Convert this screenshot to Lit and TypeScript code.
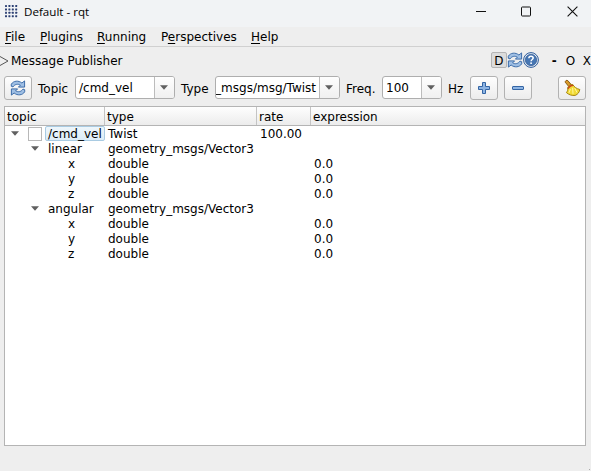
import { LitElement, html, css, svg } from "lit";
import { customElement } from "lit/decorators.js";

const refreshIcon = html`<svg class="ic" width="16" height="16" viewBox="0 0 16 16">
  <g fill="#9fbfe4" stroke="#2f62a3" stroke-width="0.9" stroke-linejoin="round">
    <path d="M1.300 4.200C3.500.6 8.500.2 11.900 3L14.600.9v6.200H8.400l2-2C7.800 3.600 4.800 4.200 3 6.900L1.300 6.300z"/>
    <path d="M14.700 11.800C12.500 15.400 7.500 15.800 4.100 13L1.400 15.100V8.900h6.200l-2 2c2.600 1.500 5.600.9 7.400-1.800l1.700.6z"/>
  </g>
</svg>`;

const helpIcon = html`<svg class="ic" width="16" height="16" viewBox="0 0 16 16">
  <circle cx="8" cy="8" r="7.400" fill="#e4edf7" stroke="#2d5a98" stroke-width="1"/>
  <circle cx="8" cy="8" r="5.700" fill="#4676b3" stroke="#234b86" stroke-width=".6"/>
  <path d="M5.900 6.300C5.900 4.900 6.800 4.200 8 4.200s2.200.7 2.200 1.900C10.200 7.500 8.100 7.600 8.100 9.300" fill="none" stroke="#fff" stroke-width="1.500"/>
  <rect x="7.300" y="10.400" width="1.600" height="1.600" fill="#fff"/>
</svg>`;

const plusIcon = html`<svg class="ic" width="16" height="16" viewBox="0 0 16 16">
  <path d="M6.500 2.500h3v4h4v3h-4v4h-3v-4h-4v-3h4z" fill="#8db4e3" stroke="#3465a4" stroke-linejoin="round"/>
</svg>`;

const minusIcon = html`<svg class="ic" width="16" height="16" viewBox="0 0 16 16">
  <rect x="2.500" y="6.500" width="11" height="3" rx=".5" fill="#8db4e3" stroke="#3465a4"/>
</svg>`;

const broomIcon = html`<svg class="ic" width="18" height="18" viewBox="0 0 18 18">
  <path d="M2.300 3.300C1.800 1.900 3.800.6 4.900 1.700L8.200 5.600 5.800 7.600z" fill="#d99a2b" stroke="#805208" stroke-width=".9" stroke-linejoin="round"/>
  <path d="M4.600 8.800C5.400 6.700 7.500 5.200 9.800 5.500c1.300 2.400 3.600 4.100 7 5-.5 2.800-1.900 4.900-4.600 5.900-3.300.4-6.200-.5-8.800-2.800C4.500 12.300 5 10.700 4.600 8.800z" fill="#f1da35" stroke="#9c7a06" stroke-width=".9" stroke-linejoin="round"/>
  <path d="M4.700 8.900C5.600 6.900 7.500 5.500 9.700 5.700l.8 1.300C8.400 6.900 6.500 8.300 5.400 10.300z" fill="#c8421a"/>
  <path d="M7.400 10 6 13.800M9.600 8.800l.4 6M11.700 9l2.300 4.500" stroke="#fff8ac" stroke-width=".9" fill="none"/>
</svg>`;

const logoDots: [number, number][] = [];
for (let r = 0; r < 4; r++)
  for (let c = 0; c < 4; c++) logoDots.push([c * 3.400, r * 3.400]);

const arrow = html`<svg class="arrow" width="8" height="5" viewBox="0 0 8 5"><path d="M0 0.300h8L4 4.800z" fill="#606060"/></svg>`;

const menus: [string, string, string, number][] = [
  ["", "F", "ile", 35],
  ["", "P", "lugins", 57],
  ["", "R", "unning", 64],
  ["P", "e", "rspectives", 90],
  ["", "H", "elp", 40],
];

interface Row {
  depth: number;
  topic: string;
  type: string;
  rate?: string;
  expr?: string;
}
const leaves: Row[] = ["x", "y", "z"].map((t) => ({ depth: 2, topic: t, type: "double", expr: "0.0" }));
const rows: Row[] = [
  { depth: 0, topic: "/cmd_vel", type: "Twist", rate: "100.00" },
  { depth: 1, topic: "linear", type: "geometry_msgs/Vector3" },
  ...leaves,
  { depth: 1, topic: "angular", type: "geometry_msgs/Vector3" },
  ...leaves,
];

@customElement("app-root")
export class AppRoot extends LitElement {
  static styles = css`
    :host {
      display: flex;
      flex-direction: column;
      box-sizing: border-box;
      width: 591px;
      height: 471px;
      overflow: hidden;
      background: #eeeeee;
      color: #000;
      font: 12px/15px "DejaVu Sans", sans-serif;
      white-space: nowrap;
    }
    * { box-sizing: border-box; }
    svg { display: block; flex: none; }
    .title {
      display: flex;
      align-items: center;
      height: 27px;
      flex: none;
      padding: 0 13px 4px 5px;
      background: #f1f3f5;
      font: 11.600px/16px "Open Sans", sans-serif;
    }
    .title .name { margin-left: 6px; flex: 1; }
    .win { display: flex; align-items: center; gap: 35px; }
    .win .close { margin-left: 1px; }
    .menu {
      display: flex;
      height: 20px;
      flex: none;
      padding: 3px 0 0 5px;
      border-bottom: 1px solid #d0d0d0;
    }
    u { text-decoration-thickness: 1px; text-underline-offset: 2px; }
    .dock { display: flex; align-items: center; height: 27px; flex: none; }
    .dock span { padding-top: 1px; }
    .dock .name { margin-left: 2px; width: 480px; }
    .dock .d {
      width: 16px;
      height: 16px;
      margin-bottom: 1px;
      padding: 0;
      border: 1px solid #b4b4b4;
      border-radius: 2px;
      background: #dcdcdc;
      text-align: center;
      line-height: 16px;
    }
    .dock .ic { margin-bottom: 1px; }
    .dash { margin-left: 13px; width: 14px; font-weight: bold; }
    .o { width: 17px; }
    .tools { display: flex; align-items: center; height: 28px; flex: none; padding: 0 5px 0 4px; }
    .btn {
      display: flex;
      align-items: center;
      justify-content: center;
      width: 28px;
      height: 24px;
      flex: none;
      border: 1px solid #b2b2b2;
      border-radius: 3px;
      background: linear-gradient(#fefefe, #ececec);
    }
    .lab { padding-top: 2px; flex: none; }
    .combo {
      display: flex;
      height: 23px;
      flex: none;
      margin-bottom: 1px;
      border: 1px solid #aeaeae;
      border-radius: 3px;
      background: #fff;
      overflow: hidden;
    }
    .combo .val { flex: 1; min-width: 0; line-height: 22px; overflow: hidden; padding-left: 3px; display: flex; }
    .combo .end { justify-content: flex-end; padding: 0 3px 0 1px; }
    .drop {
      display: flex;
      align-items: center;
      justify-content: center;
      width: 20px;
      flex: none;
      border-left: 1px solid #bcbcbc;
      padding-right: 2px;
      background: linear-gradient(#fefefe, #f0f0f0);
    }
    .c1 { width: 100px; margin-left: 7px; }
    .c2 { width: 125px; margin-left: 6px; }
    .c3 { width: 60px; margin-left: 6px; }
    .l1 { margin-left: 6px; width: 30px; }
    .l2 { margin-left: 6px; width: 28px; }
    .l3 { margin-left: 6px; width: 30px; }
    .l4 { margin-left: 6px; width: 16px; }
    .plus { margin-left: 6px; }
    .minus { margin-left: 6px; }
    .broom { margin-left: auto; }
    .tree {
      margin: 4px 5px 0 4px;
      height: 340px;
      flex: none;
      border: 1px solid #b4b4b4;
      background: #fff;
    }
    .head, .row { display: grid; grid-template-columns: 100px 152px 54px 1fr; }
    .head {
      height: 19px;
      line-height: 20px;
      background: linear-gradient(#fefefe, #ececec);
      border-bottom: 1px solid #b4b4b4;
    }
    .head span { border-right: 1px solid #c4c4c4; padding-left: 2px; height: 18px; }
    .head span:last-child { border-right: 0; }
    .row { height: 15px; line-height: 17px; }
    .row > span { padding-left: 3px; height: 15px; }
    .row .topic { display: flex; align-items: center; padding-left: 6px; }
    .row .d1 { padding-left: 26px; }
    .row .d2 { padding-left: 60px; }
    .name0, .name1, .name2 { padding-left: 2px; height: 15px; }
    .name1 { margin-left: 7px; }
    .name2 { padding-left: 3px; }
    .check { width: 14px; height: 14px; margin: 0 3px 0 9px; border: 1px solid #b8b8b8; background: #fff; flex: none; }
    .name0 {
      flex: 1;
      border: 1px solid #a9cbe2;
      border-radius: 2px;
      background: linear-gradient(#eef6fb, #dcecf7);
      line-height: 15px;
    }
    .grip { margin: auto 1px 1px auto; width: 1px; height: 1px; background: #aaa; }
  `;

  private topicCell(r: Row) {
    return html`<span class="topic d${r.depth}">
      ${r.depth < 2 ? arrow : ""}${r.depth === 0 ? html`<span class="check"></span>` : ""}
      <span class="name${r.depth}">${r.topic}</span>
    </span>`;
  }

  render() {
    return html`
      <div class="title">
        <svg width="13" height="13" viewBox="0 0 13 13">
          ${logoDots.map(([x, y]) => svg`<rect x=${x} y=${y} width="2" height="2" rx=".4" fill="#2b3f73"/>`)}
        </svg>
        <span class="name">Default - rqt</span>
        <span class="win">
          <svg width="10" height="11" viewBox="0 0 10 11"><path d="M0 5.500h10" stroke="#111"/></svg>
          <svg width="10" height="11" viewBox="0 0 10 11"><rect x=".5" y="1" width="9" height="9" rx=".8" fill="none" stroke="#111"/></svg>
          <svg class="close" width="11" height="11" viewBox="0 0 11 11"><path d="M.6.6l9.800 9.800M10.400.6L.6 10.400" stroke="#111" stroke-width="1.100"/></svg>
        </span>
      </div>
      <div class="menu">
        ${menus.map(([a, u, b, w]) => html`<span style="width:${w}px">${a}<u>${u}</u>${b}</span>`)}
      </div>
      <div class="dock">
        <svg width="9" height="10" viewBox="0 0 9 10"><path d="M0 .5L8 5 0 9.500" fill="none" stroke="#555"/></svg>
        <span class="name">Message Publisher</span>
        <span class="d">D</span>${refreshIcon}${helpIcon}
        <span class="dash">-</span><span class="o">O</span><span>X</span>
      </div>
      <div class="tools">
        <span class="btn">${refreshIcon}</span>
        <span class="lab l1">Topic</span>
        <span class="combo c1"><span class="val">/cmd_vel</span><span class="drop">${arrow}</span></span>
        <span class="lab l2">Type</span>
        <span class="combo c2"><span class="val end">_msgs/msg/Twist</span><span class="drop">${arrow}</span></span>
        <span class="lab l3">Freq.</span>
        <span class="combo c3"><span class="val">100</span><span class="drop">${arrow}</span></span>
        <span class="lab l4">Hz</span>
        <span class="btn plus">${plusIcon}</span>
        <span class="btn minus">${minusIcon}</span>
        <span class="btn broom">${broomIcon}</span>
      </div>
      <div class="tree">
        <div class="head"><span>topic</span><span>type</span><span>rate</span><span>expression</span></div>
        ${rows.map(
          (r) => html`<div class="row">
            ${this.topicCell(r)}<span>${r.type}</span><span>${r.rate ?? ""}</span><span>${r.expr ?? ""}</span>
          </div>`
        )}
      </div>
      <div class="grip"></div>
    `;
  }
}
